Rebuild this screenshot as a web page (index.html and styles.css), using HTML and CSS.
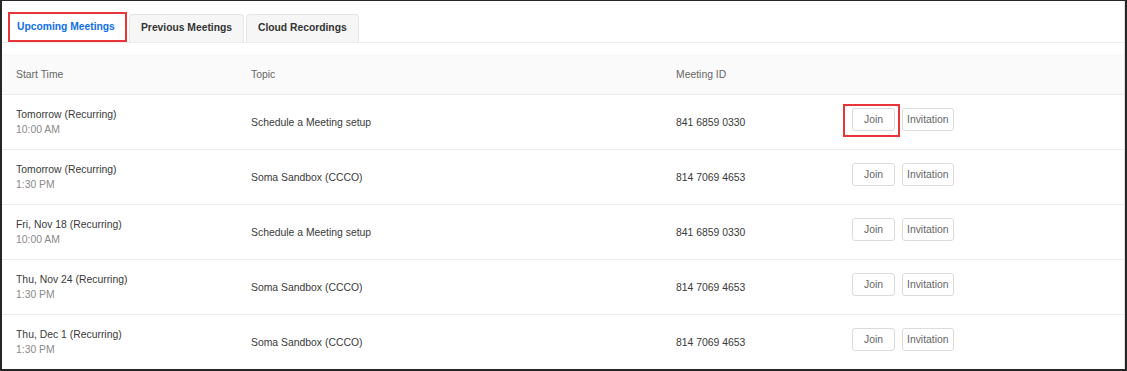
FILE: index.html
```html
<!DOCTYPE html>
<html lang="en">
<head>
    <meta charset="UTF-8">
    <title>Meetings</title>
    <link rel="stylesheet" href="styles.css">
</head>
<body>
<div class="frame">
    <div class="inner">
        <div class="tabs">
            <div class="tab tab-active">Upcoming Meetings</div>
            <div class="tab">Previous Meetings</div>
            <div class="tab">Cloud Recordings</div>
        </div>

        <div class="meetings">
            <div class="row row-head">
                <div class="cell">Start Time</div>
                <div class="cell">Topic</div>
                <div class="cell">Meeting ID</div>
                <div class="cell"></div>
            </div>

            <div class="row">
                <div class="cell when">
                    <span class="day">Tomorrow (Recurring)</span>
                    <span class="time">10:00 AM</span>
                </div>
                <div class="cell">Schedule a Meeting setup</div>
                <div class="cell">841 6859 0330</div>
                <div class="cell actions">
                    <span class="marked">
                        <button class="btn btn-join">Join</button>
                        <span class="mark"></span>
                    </span>
                    <button class="btn">Invitation</button>
                </div>
            </div>

            <div class="row">
                <div class="cell when">
                    <span class="day">Tomorrow (Recurring)</span>
                    <span class="time">1:30 PM</span>
                </div>
                <div class="cell">Soma Sandbox (CCCO)</div>
                <div class="cell">814 7069 4653</div>
                <div class="cell actions">
                    <button class="btn btn-join">Join</button>
                    <button class="btn">Invitation</button>
                </div>
            </div>

            <div class="row">
                <div class="cell when">
                    <span class="day">Fri, Nov 18 (Recurring)</span>
                    <span class="time">10:00 AM</span>
                </div>
                <div class="cell">Schedule a Meeting setup</div>
                <div class="cell">841 6859 0330</div>
                <div class="cell actions">
                    <button class="btn btn-join">Join</button>
                    <button class="btn">Invitation</button>
                </div>
            </div>

            <div class="row">
                <div class="cell when">
                    <span class="day">Thu, Nov 24 (Recurring)</span>
                    <span class="time">1:30 PM</span>
                </div>
                <div class="cell">Soma Sandbox (CCCO)</div>
                <div class="cell">814 7069 4653</div>
                <div class="cell actions">
                    <button class="btn btn-join">Join</button>
                    <button class="btn">Invitation</button>
                </div>
            </div>

            <div class="row">
                <div class="cell when">
                    <span class="day">Thu, Dec 1 (Recurring)</span>
                    <span class="time">1:30 PM</span>
                </div>
                <div class="cell">Soma Sandbox (CCCO)</div>
                <div class="cell">814 7069 4653</div>
                <div class="cell actions">
                    <button class="btn btn-join">Join</button>
                    <button class="btn">Invitation</button>
                </div>
            </div>
        </div>
    </div>
</div>
</body>
</html>
```

FILE: styles.css
```css
* {
    box-sizing: border-box;
}

body {
    margin: 0;
    font-family: "Liberation Sans", Arial, sans-serif;
    font-size: 10.4px;
    color: #3a3a3a;
    background-color: #fff;
}

.frame {
    width: 1127px;
    height: 371px;
    overflow: hidden;
    border-style: solid;
    border-color: #262626;
    border-width: 1px 2px 2px 2px;
}

.inner {
    height: 100%;
    border-right: 1px solid #dedede;
}

/* tabs */
.tabs {
    display: flex;
    align-items: flex-end;
    gap: 2px;
    height: 42px;
    padding-top: 11px;
    padding-left: 6px;
    border-bottom: 1px solid #ececec;
}

.tab {
    height: 28px;
    line-height: 26px;
    padding: 0 11px;
    font-size: 10.3px;
    font-weight: bold;
    color: #333;
    background-color: #f6f6f6;
    border: 1px solid #e6e6e6;
    border-bottom: none;
    border-radius: 4px 4px 0 0;
}

.tab-active {
    width: 119px;
    height: 30px;
    line-height: 26px;
    padding: 0 0 0 7px;
    color: #0e6ee8;
    background-color: #fff;
    border: 2px solid #e8353a;
    border-radius: 0;
}

/* table */
.meetings {
    margin-top: 11px;
}

.row {
    display: grid;
    grid-template-columns: 235px 425px 176px 1fr;
    align-items: center;
    height: 55px;
    padding-left: 14px;
    border-bottom: 1px solid #ececec;
}

.row-head {
    height: 41px;
    color: #666;
    background-color: #fafafa;
}

.when {
    display: flex;
    flex-direction: column;
    line-height: 15px;
}

.time {
    color: #8a8a8a;
}

.actions {
    display: flex;
    gap: 7px;
    padding-bottom: 5px;
}

.btn {
    height: 23px;
    padding: 0 4px;
    font-family: inherit;
    font-size: 10.4px;
    color: #666;
    background-color: #fff;
    border: 1px solid #dcdcdc;
    border-radius: 3px;
}

.btn-join {
    width: 43px;
}

.marked {
    position: relative;
    display: flex;
}

.mark {
    position: absolute;
    left: -9px;
    right: -5px;
    top: -4px;
    bottom: -6px;
    border: 2px solid #e8353a;
}
```
